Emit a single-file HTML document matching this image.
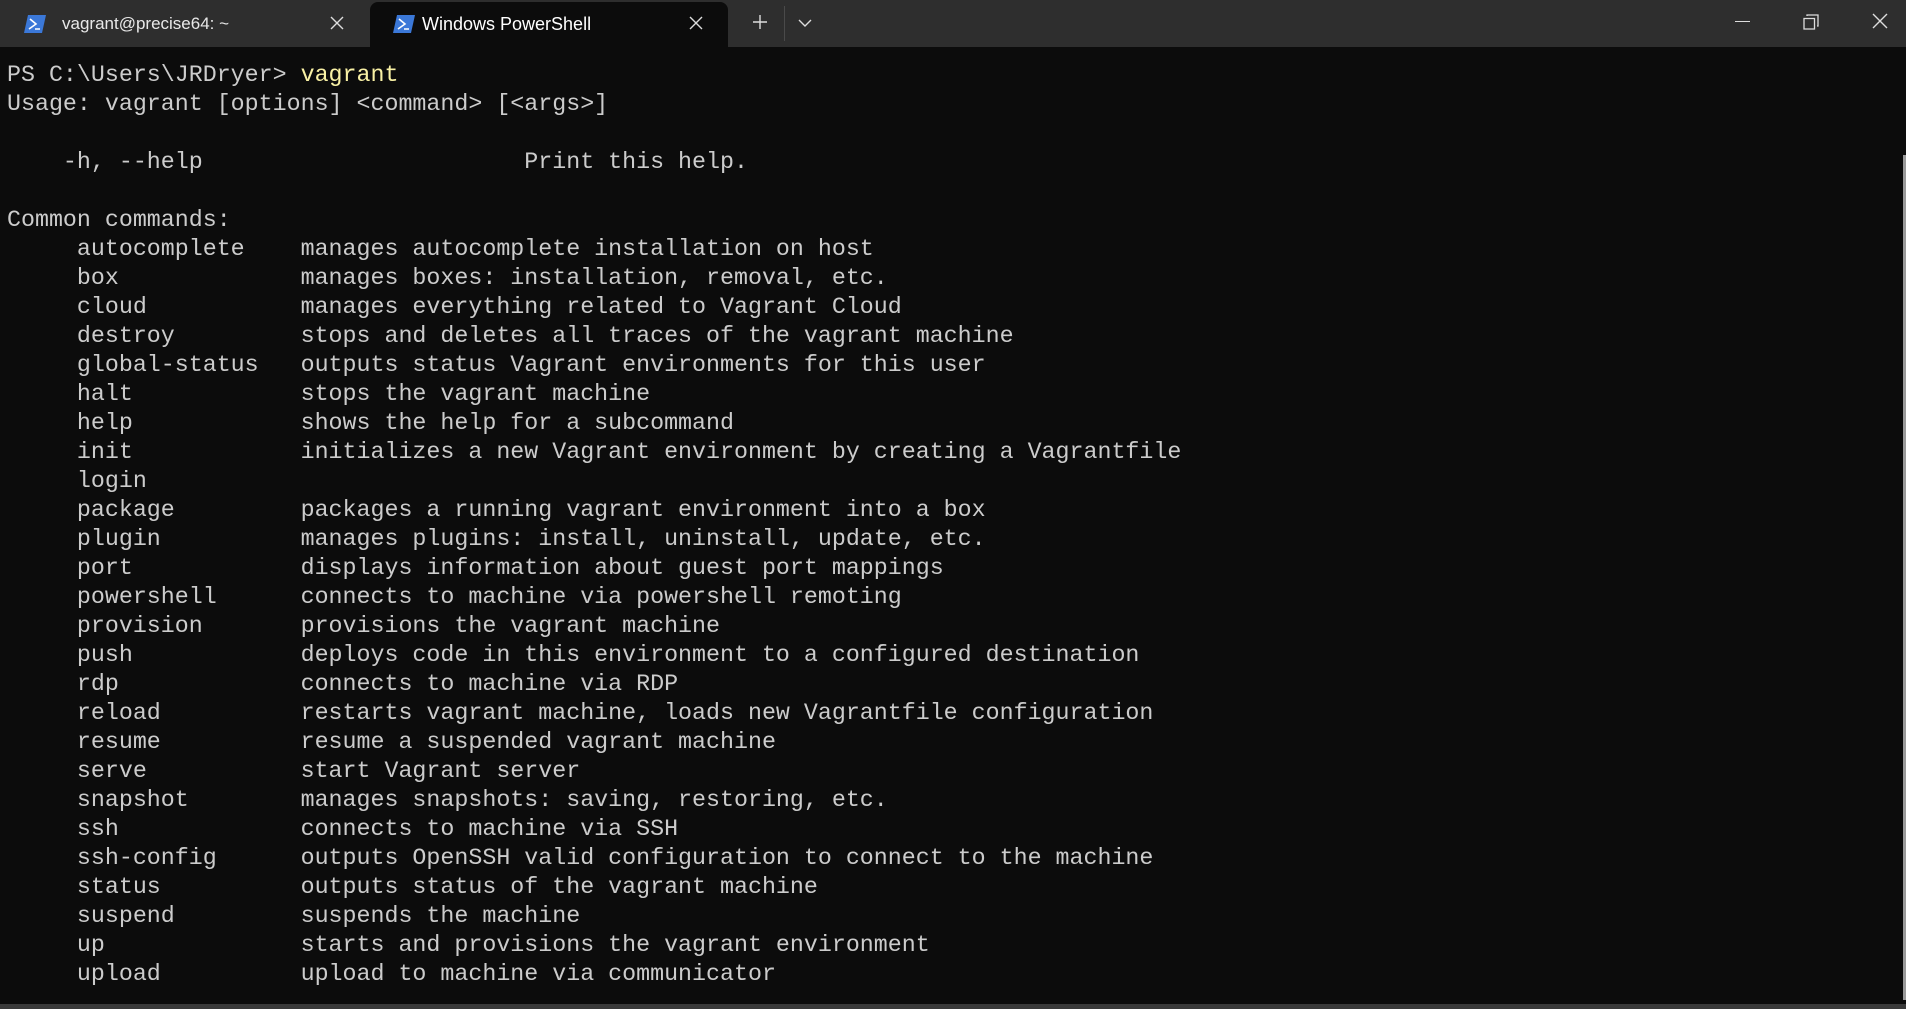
<!DOCTYPE html>
<html><head><meta charset="utf-8"><style>
html,body{margin:0;padding:0;width:1906px;height:1009px;background:#0c0c0c;overflow:hidden;position:relative}
.bar{position:absolute;left:0;top:0;width:1906px;height:47px;background:#2e2e2e}
.tab{position:absolute;top:2px;height:45px;font-family:"Liberation Sans",sans-serif;font-size:18px;color:#fff;white-space:nowrap}
.active{left:370px;width:358px;background:#0c0c0c;border-radius:8px 8px 0 0}
.ico{position:absolute;top:15px;width:22px;height:18px}
.lbl{position:absolute;top:12px;white-space:nowrap}
pre{position:absolute;left:7px;top:61px;margin:0;font-family:"Liberation Mono",monospace;font-size:23.3px;line-height:29px;color:#cccccc}
.y{color:#f9f1a5}
.sb{position:absolute;right:0;top:155px;width:3px;height:845px;background:#9a9a9a}
.bb{position:absolute;left:0;top:1004px;width:1906px;height:5px;background:#3a3a3a}
</style></head><body>
<div class="bar"></div>
<svg class="ico" style="left:24px" viewBox="0 0 22 18"><path d="M4 0H22L18 18H0Z" fill="#3b78d8"/><path d="M6 4L12 9L5 14M11 14H16" stroke="#fff" stroke-width="1.6" fill="none"/></svg>
<div class="tab" style="left:62px;color:#e8e8e8;width:250px"><span class="lbl" style="top:12px;font-size:17px">vagrant@precise64: ~</span></div>
<svg style="position:absolute;left:330px;top:16px" width="14" height="14"><path d="M1 1L13 13M13 1L1 13" stroke="#ddd" stroke-width="1.4"/></svg>
<div class="tab active">
<svg class="ico" style="left:23px;top:13px" viewBox="0 0 22 18"><path d="M4 0H22L18 18H0Z" fill="#3b78d8"/><path d="M6 4L12 9L5 14M11 14H16" stroke="#fff" stroke-width="1.6" fill="none"/></svg>
<span class="lbl" style="left:52px;top:12px">Windows PowerShell</span>
<svg style="position:absolute;left:319px;top:14px" width="14" height="14"><path d="M1 1L13 13M13 1L1 13" stroke="#ddd" stroke-width="1.4"/></svg>
</div>
<svg style="position:absolute;left:752px;top:14px" width="16" height="16"><path d="M8 1V15M1 8H15" stroke="#ddd" stroke-width="1.4"/></svg>
<div style="position:absolute;left:784px;top:6px;width:1px;height:35px;background:#4a4a4a"></div>
<svg style="position:absolute;left:798px;top:18px" width="14" height="10"><path d="M1 2L7 8L13 2" stroke="#ddd" stroke-width="1.4" fill="none"/></svg>
<div style="position:absolute;left:1735px;top:21px;width:15px;height:1px;background:#ddd"></div>
<svg style="position:absolute;left:1803px;top:13px" width="17" height="17"><path d="M1 5.5H11.5V16H1Z" stroke="#ddd" stroke-width="1.3" fill="none"/><path d="M4 3V2H15V13H14" stroke="#ddd" stroke-width="1.3" fill="none"/></svg>
<svg style="position:absolute;left:1872px;top:13px" width="16" height="16"><path d="M1 1L15 15M15 1L1 15" stroke="#ddd" stroke-width="1.4"/></svg>
<pre>PS C:\Users\JRDryer&gt; <span class="y">vagrant</span>
Usage: vagrant [options] &lt;command&gt; [&lt;args&gt;]

    -h, --help                       Print this help.

Common commands:
     autocomplete    manages autocomplete installation on host
     box             manages boxes: installation, removal, etc.
     cloud           manages everything related to Vagrant Cloud
     destroy         stops and deletes all traces of the vagrant machine
     global-status   outputs status Vagrant environments for this user
     halt            stops the vagrant machine
     help            shows the help for a subcommand
     init            initializes a new Vagrant environment by creating a Vagrantfile
     login
     package         packages a running vagrant environment into a box
     plugin          manages plugins: install, uninstall, update, etc.
     port            displays information about guest port mappings
     powershell      connects to machine via powershell remoting
     provision       provisions the vagrant machine
     push            deploys code in this environment to a configured destination
     rdp             connects to machine via RDP
     reload          restarts vagrant machine, loads new Vagrantfile configuration
     resume          resume a suspended vagrant machine
     serve           start Vagrant server
     snapshot        manages snapshots: saving, restoring, etc.
     ssh             connects to machine via SSH
     ssh-config      outputs OpenSSH valid configuration to connect to the machine
     status          outputs status of the vagrant machine
     suspend         suspends the machine
     up              starts and provisions the vagrant environment
     upload          upload to machine via communicator</pre>
<div class="sb"></div>
<div class="bb"></div>
</body></html>
